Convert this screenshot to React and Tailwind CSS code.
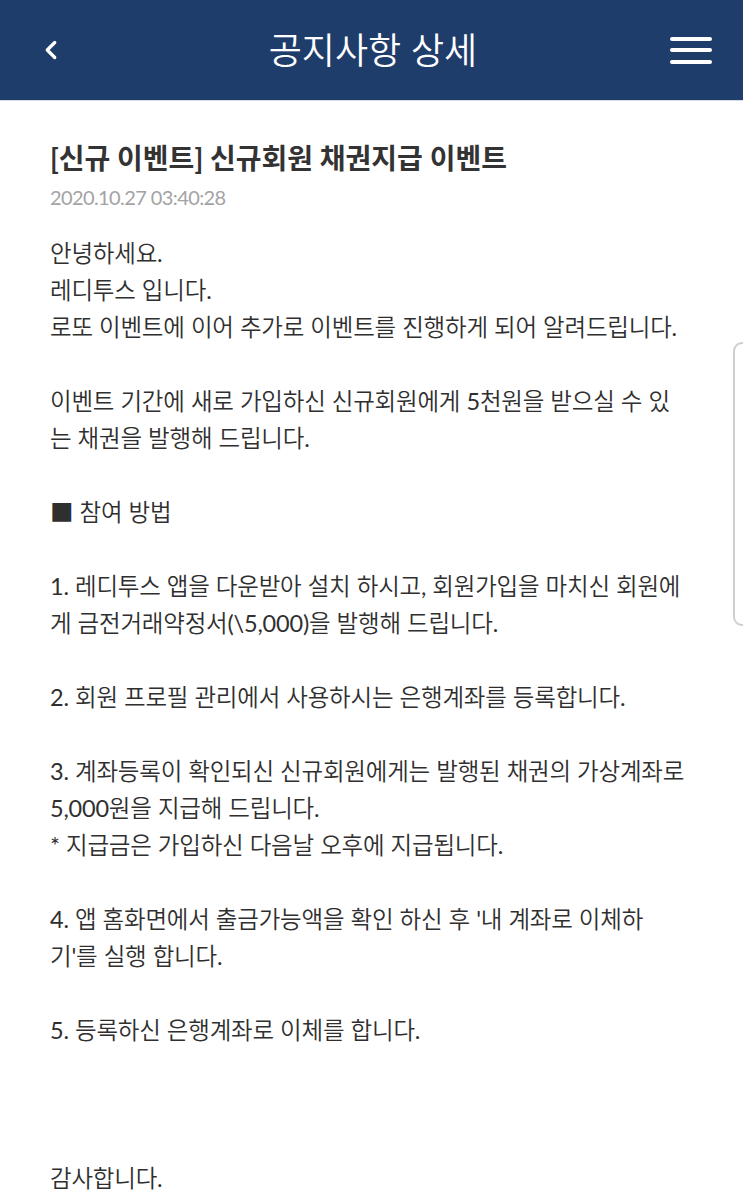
import { ChevronLeft } from "lucide-react";

const FONT = { fontFamily: "Lato, 'Noto Sans CJK KR', sans-serif" };

const lines = [
  "안녕하세요.",
  "레디투스 입니다.",
  "로또 이벤트에 이어 추가로 이벤트를 진행하게 되어 알려드립니다.",
  "",
  "이벤트 기간에 새로 가입하신 신규회원에게 5천원을 받으실 수 있",
  "는 채권을 발행해 드립니다.",
  "",
  "■ 참여 방법",
  "",
  "1. 레디투스 앱을 다운받아 설치 하시고, 회원가입을 마치신 회원에",
  "게 금전거래약정서(\\5,000)을 발행해 드립니다.",
  "",
  "2. 회원 프로필 관리에서 사용하시는 은행계좌를 등록합니다.",
  "",
  "3. 계좌등록이 확인되신 신규회원에게는 발행된 채권의 가상계좌로",
  "5,000원을 지급해 드립니다.",
  "* 지급금은 가입하신 다음날 오후에 지급됩니다.",
  "",
  "4. 앱 홈화면에서 출금가능액을 확인 하신 후 '내 계좌로 이체하",
  "기'를 실행 합니다.",
  "",
  "5. 등록하신 은행계좌로 이체를 합니다.",
  "",
  "",
  "",
  "감사합니다.",
];

// latin runs (digits, punctuation) read as regular Lato in the shot
function Line({ text }) {
  const parts = text.split(/([!-~]+)/);
  return parts.map((part, i) =>
    i % 2 === 1 ? (
      <span key={i} className="font-normal">
        {part}
      </span>
    ) : (
      part
    )
  );
}

export default function App() {
  return (
    <div className="relative min-h-[1191px] overflow-hidden bg-white" style={FONT}>
      <header className="flex h-[101px] items-center justify-between border-b border-[#d9dde3] bg-[#1f3d6b] pl-[36px] pr-[31px]">
        <button type="button" className="flex h-10 w-10 items-center justify-start text-white">
          <ChevronLeft size={30} strokeWidth={2.6} />
        </button>
        <h1 className="text-[36px] font-[350] text-white">공지사항 상세</h1>
        <button type="button" className="flex w-[42px] flex-col gap-[7.5px]">
          <span className="h-[4px] w-full rounded-full bg-white" />
          <span className="h-[4px] w-full rounded-full bg-white" />
          <span className="h-[4px] w-full rounded-full bg-white" />
        </button>
      </header>

      <main className="px-[50px] pt-[39px]">
        <h2 className="text-[28px] font-bold leading-[36px] text-[#333333]">
          [신규 이벤트] 신규회원 채권지급 이벤트
        </h2>
        <p className="mt-2 text-[20px] font-normal leading-[26px] tracking-[-0.6px] text-[#a3a3a3]">
          2020.10.27 03:40:28
        </p>

        <div className="mt-[25px] text-[23.5px] font-[350] leading-[37px] tracking-[-0.2px] text-[#2f2f2f]">
          {lines.map((line, i) => (
            <p key={i} className="h-[37px] whitespace-nowrap">
              <Line text={line} />
            </p>
          ))}
        </div>
      </main>

      <div className="absolute left-[733px] top-[342px] h-[284px] w-[30px] rounded-[9px] border-2 border-[#cfcfcf] bg-white" />
    </div>
  );
}
